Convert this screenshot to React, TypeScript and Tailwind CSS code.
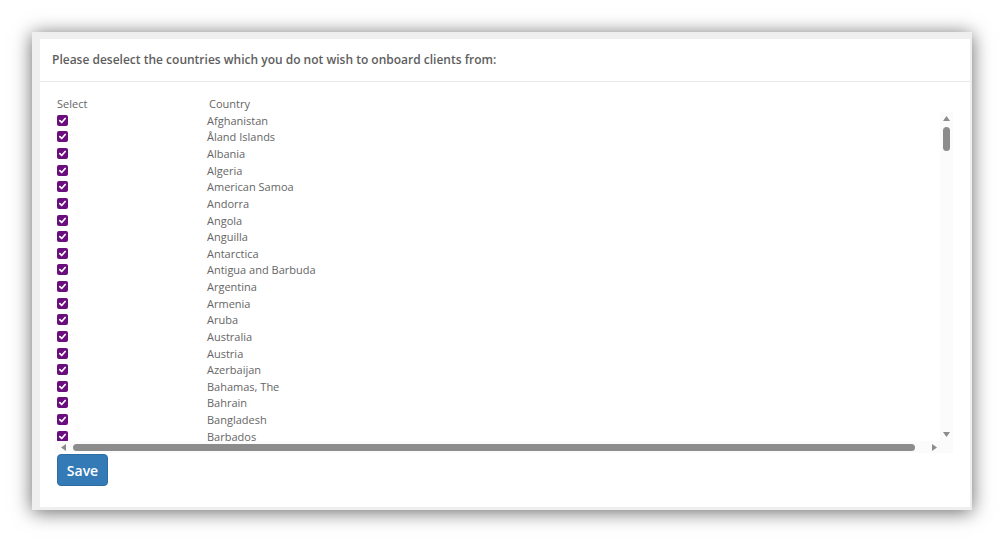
import React from 'react';

const COUNTRIES = [
  'Afghanistan', 'Åland Islands', 'Albania', 'Algeria', 'American Samoa', 'Andorra', 'Angola', 'Anguilla',
  'Antarctica', 'Antigua and Barbuda', 'Argentina', 'Armenia', 'Aruba', 'Australia', 'Austria', 'Azerbaijan',
  'Bahamas, The', 'Bahrain', 'Bangladesh', 'Barbados',
];

const Check = () => (
  <div className="w-[11px] h-[11px] rounded-[2px] bg-[#6b0e7d] flex items-center justify-center">
    <svg width="9" height="9" viewBox="0 0 10 10">
      <path d="M2 5.2 L4.1 7.2 L8 2.8" fill="none" stroke="#fff" strokeWidth="1.9" strokeLinecap="round" strokeLinejoin="round" />
    </svg>
  </div>
);

const App = () => {
  return (
    <div className="w-[1004px] h-[542px] bg-white pt-[32px] pl-[32px] font-['Open_Sans',sans-serif]">
      <div className="w-[940px] h-[478px] bg-[#efefef] pt-[7px] pl-[8px] pr-[2px] pb-[3px] shadow-[0_2px_18px_rgba(0,0,0,0.6)]">
        <div className="w-full h-full bg-white flex flex-col">
          {/* header */}
          <div className="h-[43px] shrink-0 border-b border-[#e9e9e9] pl-[12px] flex items-center">
            <span className="text-[12px] font-semibold text-[#5e5e5e]">
              Please deselect the countries which you do not wish to onboard clients from:
            </span>
          </div>

          <div className="pl-[15px] pt-[14px]">
            <div className="flex h-[16px] text-[11px] text-[#666] leading-[16px]">
              <div className="w-[154px] pl-[2px]">Select</div>
              <div>Country</div>
            </div>

            {/* scroll box */}
            <div className="w-[898px] h-[341px] flex flex-col bg-[#fbfbfb]">
              <div className="flex flex-1 min-h-0">
                <div className="flex-1 overflow-hidden bg-white">
                  {COUNTRIES.map((c) => (
                    <div key={c} className="flex items-center h-[16.63px] text-[11px] leading-[15px] text-[#666]">
                      <div className="w-[152px] pl-[2px]">
                        <Check />
                      </div>
                      <div>{c}</div>
                    </div>
                  ))}
                </div>
                {/* vertical scrollbar */}
                <div className="w-[13px] flex flex-col items-center pt-[4px] pb-[4px] pr-[1px]">
                  <svg width="7" height="5" viewBox="0 0 7 5">
                    <path d="M3.5 0 L7 5 L0 5 Z" fill="#8c8c8c" />
                  </svg>
                  <div className="mt-[6px] w-[7px] h-[24px] rounded-full bg-[#8c8c8c]" />
                  <div className="flex-1" />
                  <svg width="7" height="5" viewBox="0 0 7 5">
                    <path d="M0 0 L7 0 L3.5 5 Z" fill="#8c8c8c" />
                  </svg>
                </div>
              </div>
              {/* horizontal scrollbar */}
              <div className="h-[12px] flex items-center">
                <div className="w-[885px] flex items-center pl-[6px] pr-[3px]">
                  <svg width="5" height="7" viewBox="0 0 5 7">
                    <path d="M5 0 L5 7 L0 3.5 Z" fill="#8c8c8c" />
                  </svg>
                  <div className="ml-[7px] w-[842px] h-[7px] rounded-full bg-[#8c8c8c]" />
                  <div className="flex-1" />
                  <svg width="5" height="7" viewBox="0 0 5 7">
                    <path d="M0 0 L5 3.5 L0 7 Z" fill="#8c8c8c" />
                  </svg>
                </div>
              </div>
            </div>

            <button className="ml-[2px] mt-[1px] w-[51px] h-[32px] rounded-[4px] bg-[#337ab7] border border-[#2e6da4] text-white text-[14px] font-semibold flex items-center justify-center">
              Save
            </button>
          </div>
        </div>
      </div>
    </div>
  );
};

export default App;
